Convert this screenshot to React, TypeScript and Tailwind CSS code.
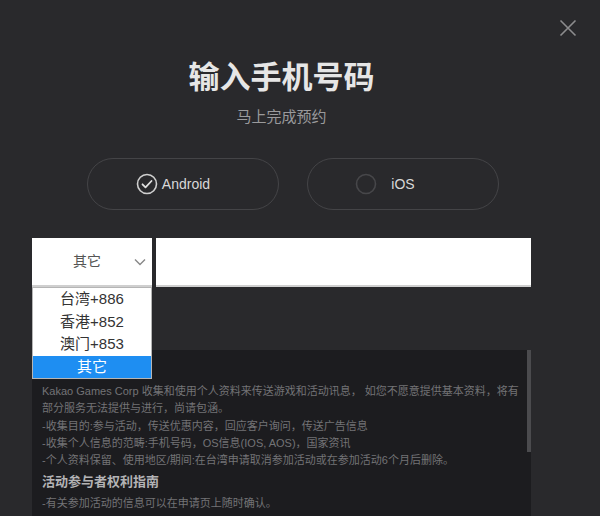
import { useState } from "react";

const font = { fontFamily: '"Liberation Sans", "Noto Sans CJK SC", sans-serif' };

const regions = ["台湾+886", "香港+852", "澳门+853", "其它"];

function CheckCircle({ checked }: { checked: boolean }) {
  return (
    <svg width="22" height="22" viewBox="0 0 22 22" fill="none">
      <circle cx="11" cy="11" r="9.5" stroke={checked ? "#cfcfcf" : "#47474a"} strokeWidth="1.6" />
      {checked && (
        <path d="M6.5 11.3l3 3 6-6.3" stroke="#e0e0e0" strokeWidth="1.8" strokeLinecap="round" strokeLinejoin="round" />
      )}
    </svg>
  );
}

export default function App() {
  const [os, setOs] = useState<"android" | "ios">("android");
  const [region, setRegion] = useState("其它");
  const [phone, setPhone] = useState("");

  return (
    <div className="relative w-[600px] h-[516px] overflow-hidden bg-[#29292c]" style={font}>
      <button className="absolute right-[23px] top-[19px] w-[18px] h-[18px]">
        <svg width="18" height="18" viewBox="0 0 18 18" fill="none">
          <path d="M1.5 1.5l15 15M16.5 1.5l-15 15" stroke="#8c8c8e" strokeWidth="1.6" />
        </svg>
      </button>

      <div className="flex flex-col ml-[32px] w-[499px]">
        <h1 className="mt-[60px] text-center text-[31px] leading-[36px] font-bold text-[#e6e6e6]">
          输入手机号码
        </h1>
        <p className="mt-[11px] text-center text-[15px] leading-[20px] text-[#9a9a9c]">马上完成预约</p>

        <div className="mt-[31px] flex gap-[28px] pl-[55px]">
          <button
            onClick={() => setOs("android")}
            className="w-[192px] h-[52px] rounded-full border border-[#444447] flex items-center justify-center gap-[4px] pr-[20px]"
          >
            <CheckCircle checked={os === "android"} />
            <span className="text-[14px] text-[#d8d8d8]">Android</span>
          </button>
          <button
            onClick={() => setOs("ios")}
            className="w-[192px] h-[52px] rounded-full border border-[#444447] flex items-center justify-center gap-[14px] pr-[36px]"
          >
            <CheckCircle checked={os === "ios"} />
            <span className="text-[14px] text-[#d8d8d8]">iOS</span>
          </button>
        </div>

        <div className="relative mt-[28px] flex gap-[4px] h-[49px]">
          <div className="w-[120px] h-full bg-white border-b-2 border-[#cfcfcf] flex items-center pl-[41px] pr-[6px]">
            <span className="flex-1 text-[14px] text-[#555]">{region}</span>
            <svg width="12" height="8" viewBox="0 0 12 8" fill="none">
              <path d="M1 1.5l5 5 5-5" stroke="#888" strokeWidth="1.4" />
            </svg>
          </div>
          <input
            value={phone}
            onChange={(e) => setPhone(e.target.value)}
            className="w-[375px] h-full bg-white border-b-2 border-[#cfcfcf] outline-none px-3 text-[14px]"
          />

          <ul className="absolute left-0 top-[49px] z-10 w-[120px] bg-white border border-[#b5b5b5]">
            {regions.map((r) => (
              <li
                key={r}
                onClick={() => setRegion(r)}
                className={
                  r === region
                    ? "h-[22.5px] leading-[22.5px] text-center text-[15px] bg-[#1e8ef2] text-white"
                    : "h-[22.5px] leading-[22.5px] text-center text-[15px] text-[#333]"
                }
              >
                {r}
              </li>
            ))}
          </ul>
        </div>

        <div className="relative mt-[63px] h-[200px] bg-[#1c1c1f] pl-[10px] pt-[33px] text-[11px] leading-[17.25px] text-[#737376]">
          <div className="absolute right-0 top-0 w-[4px] h-[102px] bg-[#4b4b4e]" />
          <p>
            Kakao Games Corp 收集和使用个人资料来传送游戏和活动讯息， 如您不愿意提供基本资料，将有
            <br />
            部分服务无法提供与进行，尚请包涵。
          </p>
          <p>-收集目的:参与活动，传送优惠内容，回应客户询问，传送广告信息</p>
          <p>-收集个人信息的范畴:手机号码，OS信息(IOS, AOS)，国家资讯</p>
          <p>-个人资料保留、使用地区/期间:在台湾申请取消参加活动或在参加活动6个月后删除。</p>
          <h2 className="mt-[3px] text-[13px] leading-[20px] font-bold text-[#b3b3b5]">活动参与者权利指南</h2>
          <p className="mt-[3px]">-有关参加活动的信息可以在申请页上随时确认。</p>
        </div>
      </div>
    </div>
  );
}
